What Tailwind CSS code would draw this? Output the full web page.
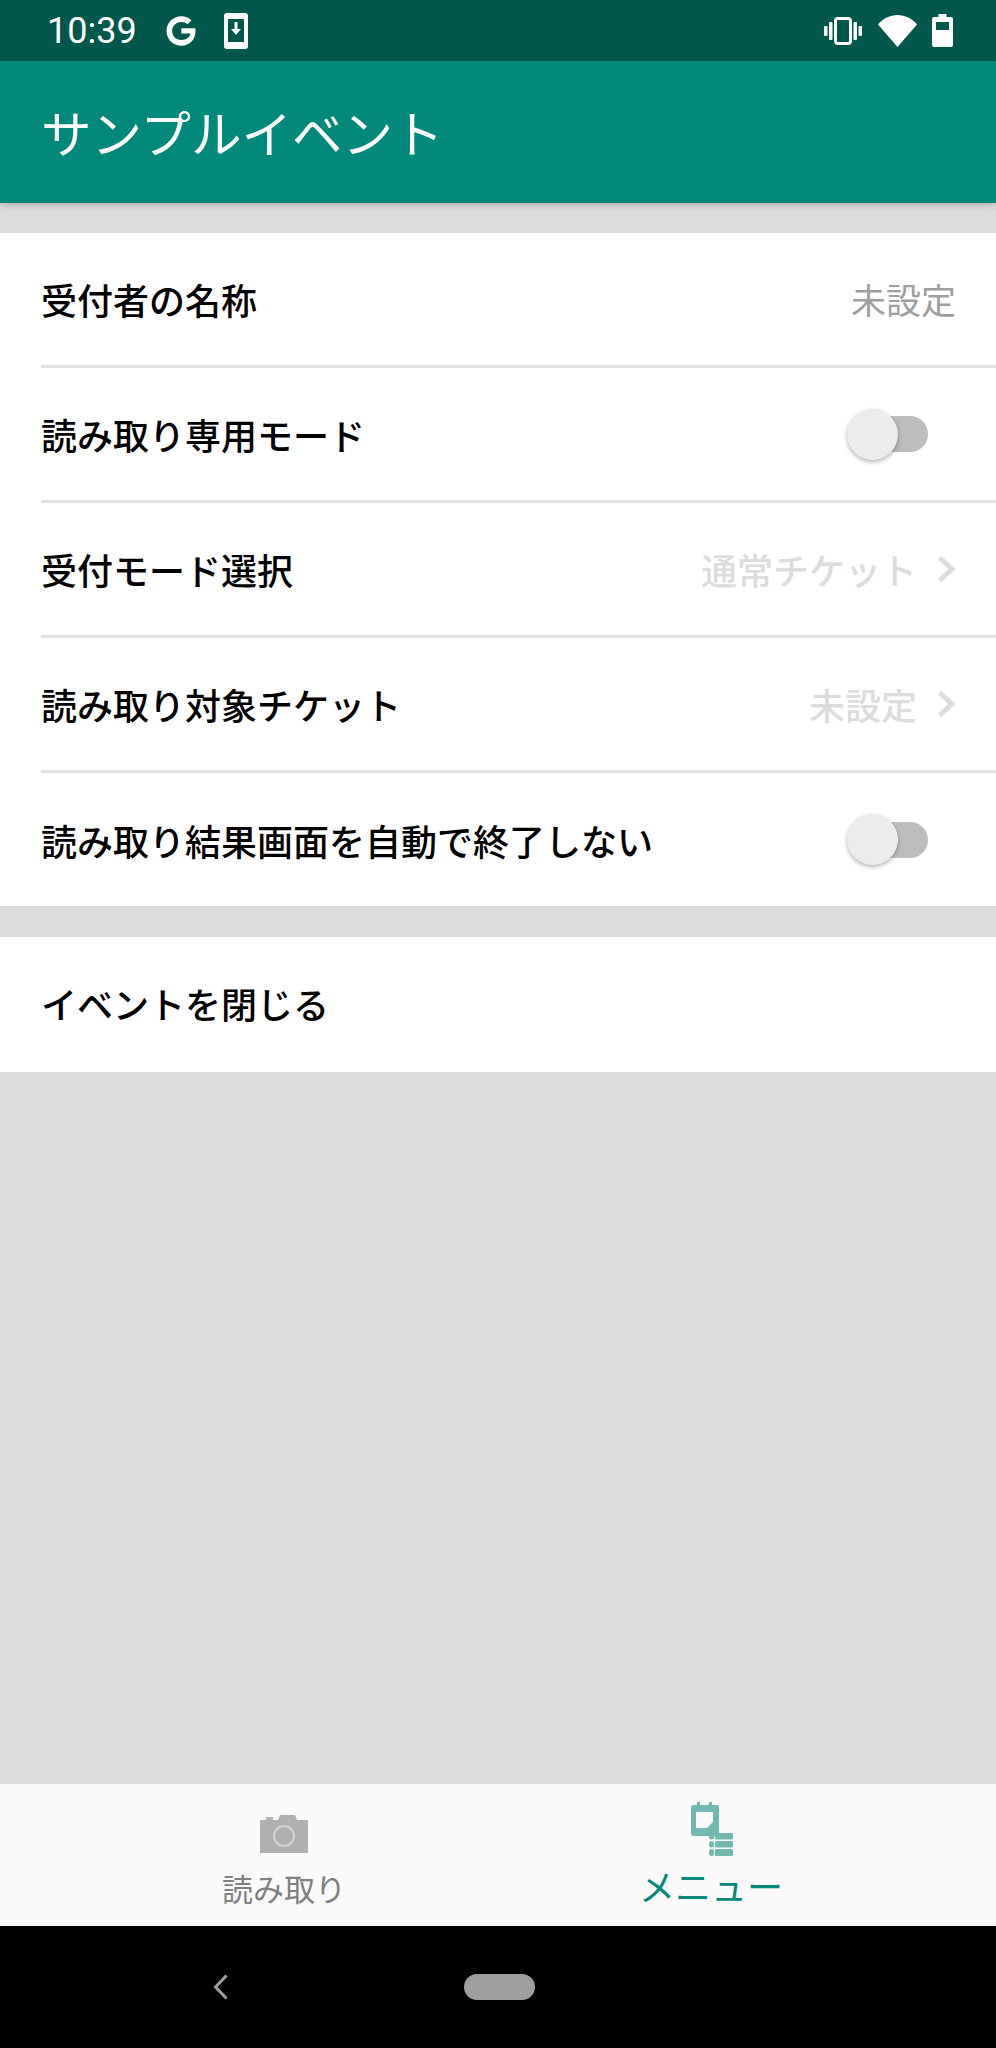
<!DOCTYPE html>
<html lang="ja">
<head>
    <meta charset="UTF-8">
    <meta name="viewport" content="width=device-width, initial-scale=1.0">
    <title>サンプルイベント</title>
    <script src="https://cdn.jsdelivr.net/npm/@tailwindcss/browser@4"></script>
</head>
<body class="bg-[#dcdcdc] font-['Noto_Sans_CJK_JP',sans-serif]">
    <div class="w-[996px] h-[2048px] flex flex-col overflow-hidden">
        <!-- status bar -->
        <div class="h-[61px] bg-[#00574b] flex items-center text-white pl-[47px] pr-[43px]">
            <span class="font-['Roboto',sans-serif] text-[36px] leading-none w-[118px]">10:39</span>
            <svg class="w-[32px] h-[32px]" viewBox="0 0 32 32"><path d="M16.3 13.2v5.4h9.1c-.7 3.9-4.1 6.4-9.1 6.4-5.2 0-9.2-4-9.2-9s4-9 9.2-9c2.4 0 4.5.8 6.2 2.3l4-4C23.700 2.700 20.300 1.300 16.300 1.300 8 1.300 1.500 7.800 1.500 16s6.500 14.700 14.800 14.700c8.500 0 14.200-6 14.200-14.400 0-1-.1-2.100-.3-3.100z" fill="#fff"/></svg>
            <svg class="w-[24px] h-[36px] ml-[27px]" viewBox="0 0 24 36"><rect width="24" height="36" rx="3" fill="#fff"/><rect x="4" y="6" width="16" height="23" fill="#00574b"/><path d="M10.500 9h3v7h3.500l-5 6-5-6h3.500z" fill="#fff"/></svg>
            <div class="ml-auto flex items-center">
                <svg class="w-[38px] h-[28px]" viewBox="0 0 38 28" fill="#fff"><rect x="0" y="9" width="3.500" height="10" rx="1"/><rect x="5" y="5" width="3.500" height="18" rx="1"/><rect x="29.500" y="5" width="3.500" height="18" rx="1"/><rect x="34.500" y="9" width="3.500" height="10" rx="1"/><rect x="11.500" y="1.500" width="15" height="25" rx="2.500" fill="none" stroke="#fff" stroke-width="3"/></svg>
                <svg class="w-[39px] h-[32px] ml-[16px]" viewBox="0 0 39 32"><path d="M0 9.500C5 3.500 12 0 19.500 0S34 3.500 39 9.500L19.500 32z" fill="#fff"/></svg>
                <svg class="w-[21px] h-[33px] ml-[15px]" viewBox="0 0 21 33"><path d="M6.500 0h8v3h4.500a2 2 0 0 1 2 2v26a2 2 0 0 1-2 2H2a2 2 0 0 1-2-2V5a2 2 0 0 1 2-2h4.500z" fill="#fff"/><rect x="4" y="8" width="13" height="8" fill="#00574b"/></svg>
            </div>
        </div>
        <!-- app bar -->
        <div class="h-[142px] bg-[#00897b] flex items-center pl-[41px] pb-[2px] text-white text-[50.500px] leading-none shadow-[0_3px_6px_rgba(0,0,0,0.16)] relative">サンプルイベント</div>

        <!-- settings -->
        <div class="mt-[30px] bg-white text-[36px] font-medium text-black">
            <div class="h-[132px] pl-[41px] pr-[40px] flex items-center justify-between">
                <span>受付者の名称</span>
                <span class="text-[#9e9e9e] font-normal text-[35px]">未設定</span>
            </div>
            <div class="h-[3px] ml-[41px] bg-[#e0e0e0]"></div>
            <div class="h-[132px] pl-[41px] pr-[68px] flex items-center justify-between">
                <span>読み取り専用モード</span>
                <div class="relative w-[81px] h-[51px] flex items-center justify-end">
                    <div class="w-[70px] h-[36px] rounded-full bg-[#bdbdbd]"></div>
                    <div class="absolute left-0 top-0 w-[51px] h-[51px] rounded-full bg-[#ececec] shadow-[0_2px_4px_rgba(0,0,0,0.3)]"></div>
                </div>
            </div>
            <div class="h-[3px] ml-[41px] bg-[#e0e0e0]"></div>
            <div class="h-[132px] pl-[41px] pr-[40px] flex items-center justify-between">
                <span>受付モード選択</span>
                <span class="flex items-center text-[#dcdcdc] gap-[20px]">通常チケット
                    <svg class="w-[19px] h-[28px]" viewBox="0 0 19 28"><path d="M2.500 2.500 15 14 2.500 25.500" fill="none" stroke="#dcdcdc" stroke-width="5"/></svg>
                </span>
            </div>
            <div class="h-[3px] ml-[41px] bg-[#e0e0e0]"></div>
            <div class="h-[132px] pl-[41px] pr-[40px] flex items-center justify-between">
                <span>読み取り対象チケット</span>
                <span class="flex items-center text-[#dcdcdc] gap-[20px]">未設定
                    <svg class="w-[19px] h-[28px]" viewBox="0 0 19 28"><path d="M2.500 2.500 15 14 2.500 25.500" fill="none" stroke="#dcdcdc" stroke-width="5"/></svg>
                </span>
            </div>
            <div class="h-[3px] ml-[41px] bg-[#e0e0e0]"></div>
            <div class="h-[133px] pl-[41px] pr-[68px] flex items-center justify-between">
                <span>読み取り結果画面を自動で終了しない</span>
                <div class="relative w-[81px] h-[51px] flex items-center justify-end">
                    <div class="w-[70px] h-[36px] rounded-full bg-[#bdbdbd]"></div>
                    <div class="absolute left-0 top-0 w-[51px] h-[51px] rounded-full bg-[#ececec] shadow-[0_2px_4px_rgba(0,0,0,0.3)]"></div>
                </div>
            </div>
        </div>
        <div class="mt-[31px] h-[135px] bg-white pl-[41px] pb-[3px] flex items-center text-[36px] font-medium text-black">イベントを閉じる</div>

        <div class="flex-1"></div>

        <!-- bottom tabs -->
        <div class="h-[142px] bg-[#fafafa] flex">
            <div class="w-[498px] flex flex-col items-center pl-[70px]">
                <svg class="w-[48px] h-[39px] mt-[30px] shrink-0" viewBox="0 0 48 39"><path d="M1 6h5V3h7v3h5l2-5h15l2 5h10a1 1 0 0 1 1 1v31a1 1 0 0 1-1 1H1a1 1 0 0 1-1-1V7a1 1 0 0 1 1-1z" fill="#b0b0b0"/><circle cx="24" cy="22" r="10" fill="none" stroke="#d4d4d4" stroke-width="2"/></svg>
                <span class="text-[31px] leading-none mt-[19px] text-[#808080]">読み取り</span>
            </div>
            <div class="w-[498px] flex flex-col items-center pr-[72px]">
                <svg class="w-[42px] h-[54px] mt-[18px] ml-[2px] shrink-0" viewBox="0 0 42 54">
                    <path d="M6 0h3v3h9V0h3v3h4a3 3 0 0 1 3 3v25a3 3 0 0 1-3 3H3a3 3 0 0 1-3-3V6a3 3 0 0 1 3-3h3z" fill="#6fb9ae"/>
                    <path d="M5 10h17v10l-6 6H5z" fill="#fafafa"/>
                    <g fill="#6fb9ae"><rect x="18" y="31" width="5" height="6.500" rx="2.500"/><rect x="24" y="31" width="18" height="6.500" rx="1.500"/><rect x="18" y="39" width="5" height="6.500" rx="2.500"/><rect x="24" y="39" width="18" height="6.500" rx="1.500"/><rect x="18" y="47" width="5" height="7" rx="2.500"/><rect x="24" y="47" width="18" height="7" rx="1.500"/></g>
                </svg>
                <span class="text-[36px] leading-none mt-[11px] text-[#00897b]">メニュー</span>
            </div>
        </div>
        <!-- nav bar -->
        <div class="h-[122px] bg-black flex items-center pl-[213px] pb-[1px]">
            <svg class="w-[16px] h-[26px]" viewBox="0 0 16 26"><path d="M13.500 1.500 2.500 13l11 11.500" fill="none" stroke="#9e9e9e" stroke-width="3"/></svg>
            <div class="h-[26px] w-[71px] ml-[235px] rounded-full bg-[#9e9e9e]"></div>
        </div>
    </div>
</body>
</html>
